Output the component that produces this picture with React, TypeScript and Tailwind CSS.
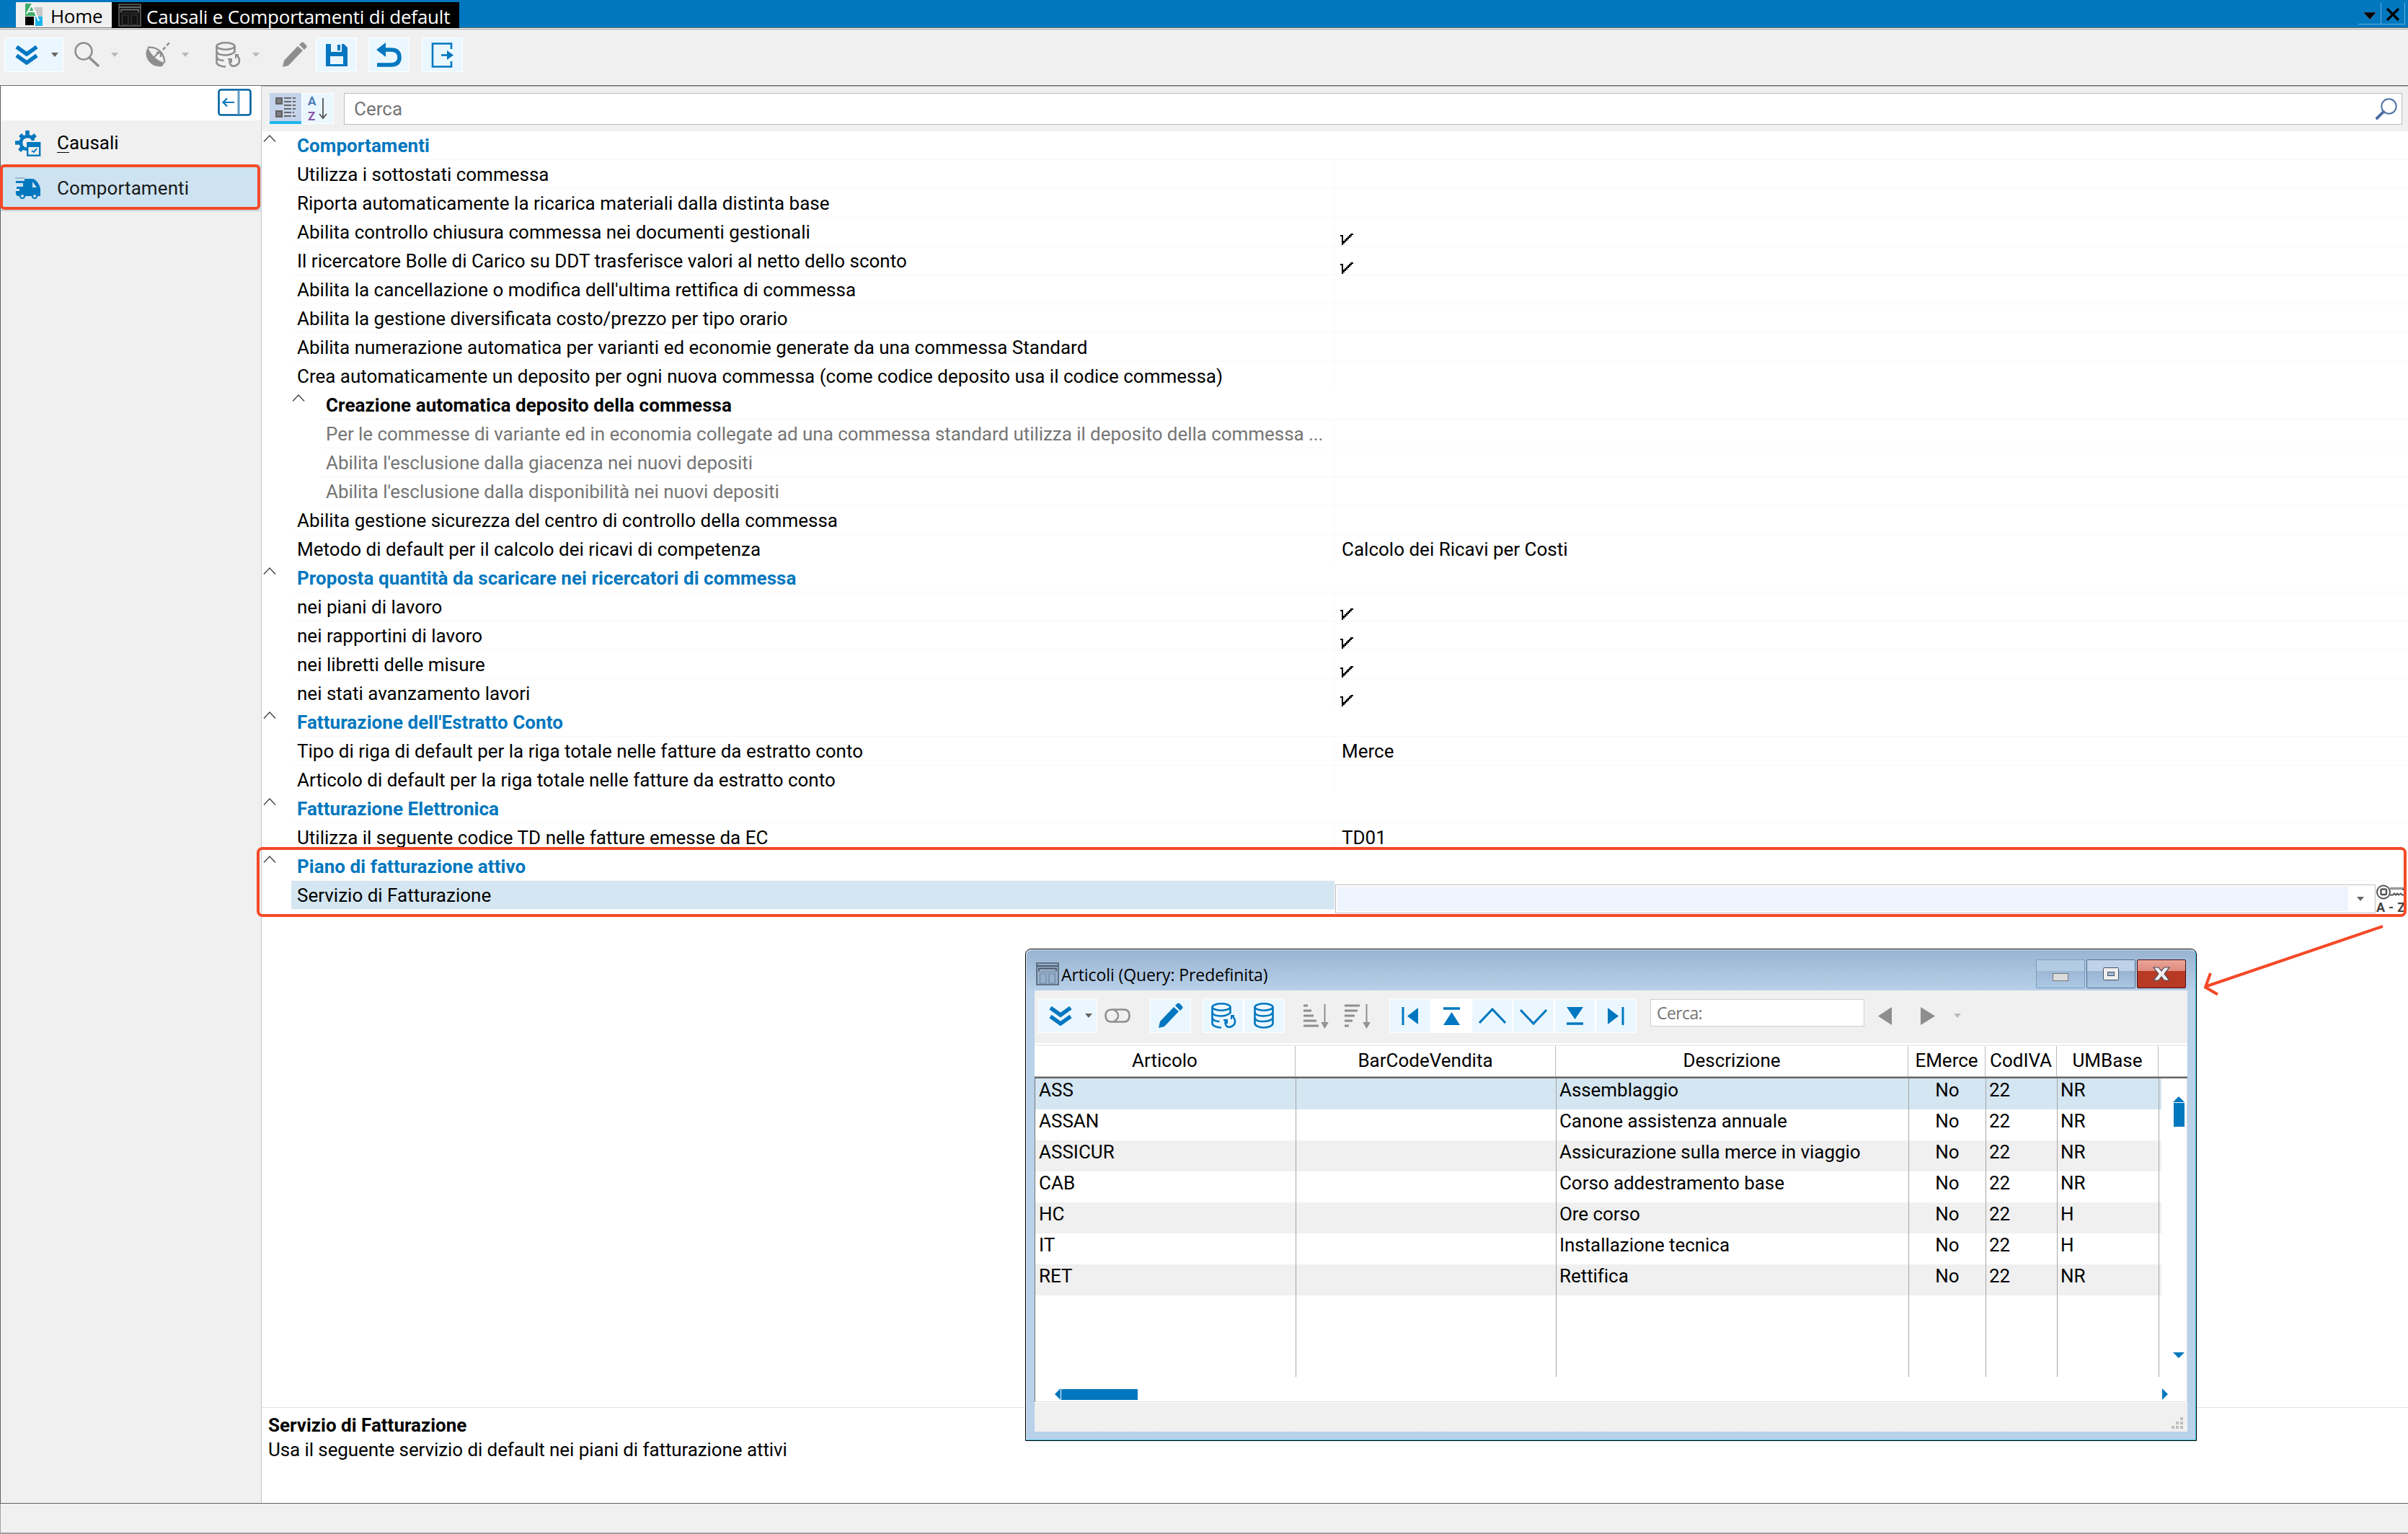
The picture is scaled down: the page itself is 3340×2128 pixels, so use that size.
import React from 'react';
import clsx from 'clsx';

type Row = {
  label: string;
  kind?: 'section' | 'group' | 'sub';
  checked?: boolean;
  value?: string;
  selected?: boolean;
};

const rows: Row[] = [
  { label: 'Comportamenti', kind: 'section' },
  { label: 'Utilizza i sottostati commessa' },
  { label: 'Riporta automaticamente la ricarica materiali dalla distinta base' },
  { label: 'Abilita controllo chiusura commessa nei documenti gestionali', checked: true },
  { label: 'Il ricercatore Bolle di Carico su DDT trasferisce valori al netto dello sconto', checked: true },
  { label: "Abilita la cancellazione o modifica dell'ultima rettifica di commessa" },
  { label: 'Abilita la gestione diversificata costo/prezzo per tipo orario' },
  { label: 'Abilita numerazione automatica per varianti ed economie generate da una commessa Standard' },
  { label: 'Crea automaticamente un deposito per ogni nuova commessa (come codice deposito usa il codice commessa)' },
  { label: 'Creazione automatica deposito della commessa', kind: 'group' },
  { label: 'Per le commesse di variante ed in economia collegate ad una commessa standard utilizza il deposito della commessa ...', kind: 'sub' },
  { label: "Abilita l'esclusione dalla giacenza nei nuovi depositi", kind: 'sub' },
  { label: "Abilita l'esclusione dalla disponibilità nei nuovi depositi", kind: 'sub' },
  { label: 'Abilita gestione sicurezza del centro di controllo della commessa' },
  { label: 'Metodo di default per il calcolo dei ricavi di competenza', value: 'Calcolo dei Ricavi per Costi' },
  { label: 'Proposta quantità da scaricare nei ricercatori di commessa', kind: 'section' },
  { label: 'nei piani di lavoro', checked: true },
  { label: 'nei rapportini di lavoro', checked: true },
  { label: 'nei libretti delle misure', checked: true },
  { label: 'nei stati avanzamento lavori', checked: true },
  { label: "Fatturazione dell'Estratto Conto", kind: 'section' },
  { label: 'Tipo di riga di default per la riga totale nelle fatture da estratto conto', value: 'Merce' },
  { label: 'Articolo di default per la riga totale nelle fatture da estratto conto' },
  { label: 'Fatturazione Elettronica', kind: 'section' },
  { label: 'Utilizza il seguente codice TD nelle fatture emesse da EC', value: 'TD01' },
  { label: 'Piano di fatturazione attivo', kind: 'section' },
  { label: 'Servizio di Fatturazione', selected: true },
];

const articles = [
  ['ASS', 'Assemblaggio', 'NR'],
  ['ASSAN', 'Canone assistenza annuale', 'NR'],
  ['ASSICUR', 'Assicurazione sulla merce in viaggio', 'NR'],
  ['CAB', 'Corso addestramento base', 'NR'],
  ['HC', 'Ore corso', 'H'],
  ['IT', 'Installazione tecnica', 'H'],
  ['RET', 'Rettifica', 'NR'],
];

const gridCols = 'grid grid-cols-[362px_361px_489px_107px_99px_141px]';

function Svg({ w, h, className, children }: { w: number; h: number; className?: string; children: React.ReactNode }) {
  return (
    <svg width={w} height={h} viewBox={`0 0 ${w} ${h}`} fill="none" className={clsx('shrink-0', className)}>
      {children}
    </svg>
  );
}

const Caret = ({ className }: { className?: string }) => (
  <Svg w={10} h={6} className={className}>
    <path d="M0 0h10L5 6z" fill="currentColor" />
  </Svg>
);

const Chevrons = () => (
  <Svg w={32} h={27}>
    <path d="M2 2l14 10L30 2M2 14l14 10 14-10" stroke="currentColor" strokeWidth="5.500" />
  </Svg>
);

const Pencil = () => (
  <Svg w={36} h={36}>
    <path d="M1 35l2-9L22 6l7 6L9 33z" fill="currentColor" />
    <path d="M24 4l3-3q1-1 3 0l4 4q1 2 0 3l-3 3z" fill="currentColor" />
  </Svg>
);

const Database = ({ refresh }: { refresh?: boolean }) => (
  <Svg w={36} h={36}>
    <g stroke="currentColor" strokeWidth="2.600">
      <ellipse cx="15" cy="6" rx="12.500" ry="4.700" />
      <path d="M2.500 6v22.500c0 3 5 6 12.500 6" />
      <path d="M2.500 13.500c1 4 6 5 12 5M2.500 21c1 4 5 5 10 5" />
      {refresh ? (
        <>
          <path d="M27.500 6v9M14 18.500q8 0 13-4" />
          <path d="M29 18q5 3 5 8t-5 7q-4 2-7-1-3-4 0-9" />
          <path d="M18 24h5v5M33 18h-4v5" strokeWidth="2" />
        </>
      ) : (
        <path d="M27.500 6v22.500c0 3-5 6-12.500 6M14 18.500c8 0 12-2 13.500-5M12 26c8 0 14-1 15.500-5" />
      )}
    </g>
  </Svg>
);

const Expander = () => (
  <Svg w={18} h={10}>
    <path d="M1 9.500L9 1l8 8.500" stroke="#444" strokeWidth="1.400" />
  </Svg>
);

const Check = () => (
  <Svg w={18} h={16} className="mt-[21px] self-start">
    <path
      d="M0 2h4v8h2v-2h2v-2h2v-2h2v-2h2v-2h4v2h-2v2h-2v2h-2v2h-2v2h-2v2h-2v2h-2v2H2V4H0z"
      fill="#000"
      shapeRendering="crispEdges"
    />
  </Svg>
);

const WindowGlyph = ({ stroke, fill }: { stroke: string; fill: string }) => (
  <Svg w={32} h={32}>
    <rect x="1" y="1" width="30" height="30" fill={fill} stroke={stroke} strokeWidth="1.500" />
    <path d="M1 5h30M4 12V8.500h24V12" stroke={stroke} strokeWidth="1.800" />
    <path d="M3 13h26M5.500 16h8.500v13H5.500zM18 16h8.500v13H18z" stroke={stroke} strokeWidth="1.200" opacity="0.500" />
  </Svg>
);

function ToolButton({ on, className, children }: { on?: boolean; className?: string; children: React.ReactNode }) {
  return (
    <div
      className={clsx(
        'flex h-12 shrink-0 items-center justify-center',
        on ? 'border border-white bg-[#ebf7ff] text-[#0077c0]' : 'text-[#8e8e8e]',
        className,
      )}
    >
      {children}
    </div>
  );
}

function TitleBar() {
  return (
    <div className="flex h-[38px] bg-[#0077be]">
      <div className="ml-[22px] mt-[3px] flex w-[133px] items-center bg-[#f0f0f0] pl-[13px]">
        <Svg w={24} h={31}>
          <path d="M0 0h9l7 17-16 0z" fill="#3fae68" />
          <path d="M11 5h13v13h-7z" fill="#c9c9c9" />
          <path d="M0 18h12v12H0z" fill="#000" />
          <path d="M14 18h10v13H14z" fill="#1cb5ea" />
          <path d="M2 14L9 2l10 22M5 11h10" stroke="#fff" strokeWidth="2" />
        </Svg>
        <span className="ml-[11px] pt-[3px] text-[26px] leading-none tracking-[-0.300px]">Home</span>
      </div>
      <div className="relative mt-[3px] flex h-9 w-[482px] items-center bg-black pl-[9px]">
        <WindowGlyph stroke="#666" fill="#111" />
        <span className="ml-[7px] whitespace-nowrap pt-[3px] text-[26px] leading-none tracking-[-0.220px] text-white">
          Causali e Comportamenti di default
        </span>
      </div>
      <div className="ml-auto mr-1 mt-1 flex h-[30px] border-b border-r border-[#62b0e0]">
        <div className="flex w-[32px] items-center justify-center border-r border-[#62b0e0] pt-[7px]">
          <Svg w={18} h={10}>
            <path d="M0 0h18L9 10z" fill="#000" stroke="#a88" strokeWidth="0.500" />
          </Svg>
        </div>
        <div className="flex w-[32px] items-center justify-center pt-[3px]">
          <Svg w={20} h={18}>
            <path d="M2 1l16 16M18 1L2 17" stroke="#000" strokeWidth="3.200" />
          </Svg>
        </div>
      </div>
    </div>
  );
}

function Toolbar() {
  return (
    <div className="flex h-[77px] border-b border-white bg-[#f0f0f0] pl-[6px] pt-[11px]">
      <ToolButton on className="w-[82px] gap-[18px] pl-[8px]">
        <Chevrons />
        <Caret className="text-[#666]" />
      </ToolButton>
      <ToolButton className="ml-[15px]">
        <Svg w={36} h={36}>
          <circle cx="13" cy="13" r="11.500" stroke="currentColor" strokeWidth="2.400" />
          <path d="M20 21l14 13" stroke="currentColor" strokeWidth="3.600" />
        </Svg>
        <Caret className="ml-[15px] text-[#b9b9b9]" />
      </ToolButton>
      <ToolButton className="ml-[37px]">
        <Svg w={36} h={36}>
          <path d="M4 8q-5 8 0 17 7 11 20 9l3-5Q12 25 4 8z" fill="currentColor" />
          <path d="M4 8q10-2 18 6 6 8 5 15" stroke="currentColor" strokeWidth="2.400" />
          <path d="M13 21l8-8M16 15h6v6" stroke="currentColor" strokeWidth="2.400" />
          <path d="M25 11l9-10" stroke="currentColor" strokeWidth="2.600" strokeDasharray="5 3" />
        </Svg>
        <Caret className="ml-[15px] text-[#b9b9b9]" />
      </ToolButton>
      <ToolButton className="ml-[36px]">
        <Database refresh />
        <Caret className="ml-[16px] text-[#b9b9b9]" />
      </ToolButton>
      <ToolButton className="ml-[31px]">
        <Pencil />
      </ToolButton>
      <ToolButton on className="ml-[11px] w-[57px]">
        <Svg w={32} h={33}>
          <path d="M1 1h25l5 5v26H1z" fill="currentColor" />
          <path d="M8 1h15v11H8zM7 18h18v11H7z" fill="#ebf7ff" />
          <path d="M17 2h4v8h-4z" fill="currentColor" />
        </Svg>
      </ToolButton>
      <ToolButton on className="ml-[16px] w-[57px]">
        <Svg w={36} h={35}>
          <path d="M8 10h12q12 0 12 10.500T20 31H1" stroke="currentColor" strokeWidth="5.500" />
          <path d="M13 0v20L0 10z" fill="currentColor" />
        </Svg>
      </ToolButton>
      <ToolButton on className="ml-[17px] w-[57px]">
        <Svg w={32} h={35}>
          <path d="M28 9V1.500H2v32h26V26" stroke="currentColor" strokeWidth="2.600" />
          <path d="M14 17.500h12" stroke="currentColor" strokeWidth="2.600" />
          <path d="M22 11l9 6.500-9 6.500z" fill="currentColor" />
        </Svg>
      </ToolButton>
    </div>
  );
}

function Sidebar() {
  return (
    <div className="w-[362px] shrink-0 border-r border-[#c8c8c8] bg-[#f0f0f0]">
      <div className="flex h-12 justify-end bg-white pr-[13px] pt-[4px]">
        <Svg w={47} h={38}>
          <rect x="1.500" y="1.500" width="44" height="35" rx="3" stroke="#00629f" strokeWidth="2.600" />
          <path d="M29 2v34" stroke="#5d9bc4" strokeWidth="3" />
          <path d="M23 19H8M13 13.500L7.500 19l5.500 5.500" stroke="#0077be" strokeWidth="2.200" />
        </Svg>
      </div>
      <div className="flex h-[61px] items-center pl-[20px] pt-[2px]">
        <Svg w={36} h={36}>
          <path d="M16 26q-8-1-8-9t9-9q7 0 8 6" stroke="#0077be" strokeWidth="4.500" />
          <path d="M17 0v7M7 6l5 5M0 17h7M6 28l5-5M28 6l-5 5" stroke="#0077be" strokeWidth="5.500" />
          <rect x="17.200" y="17.200" width="17" height="17.500" fill="#f0f0f0" stroke="#0077be" strokeWidth="2.400" />
          <path d="M17 17h18v6H17z" fill="#0077be" />
          <path d="M23 28l3 2 4-5" stroke="#0077be" strokeWidth="2" />
        </Svg>
        <span className="ml-[22px] text-[26px]">
          <span className="underline decoration-1 underline-offset-4">C</span>ausali
        </span>
      </div>
      <div className="flex h-[65px] items-center border-b border-[#c8c8c8] bg-[#cde3f1] pl-[20px] pt-[2px] text-[#1a1a1a]">
        <Svg w={36} h={30}>
          <path d="M13 2h12q8 4 10 14v10H3q-3-3-2-7h5v-3H2v-3h9V8H1V5h12z" fill="#0077be" />
          <path d="M0 1h13" stroke="#9db9cc" strokeWidth="2" />
          <path d="M24 6l6 8h-6z" fill="#cde3f1" />
          <circle cx="10" cy="26" r="3" fill="#cde3f1" stroke="#0077be" strokeWidth="2" />
          <circle cx="27" cy="26" r="3" fill="#cde3f1" stroke="#0077be" strokeWidth="2" />
        </Svg>
        <span className="ml-[22px] text-[26px] tracking-[0.100px]">Comportamenti</span>
      </div>
    </div>
  );
}

function SearchBar() {
  return (
    <div className="flex h-[60px] bg-[#f0f0f0] pl-[11px] pr-[8px] pt-[7px]">
      <div className="flex h-[43px] w-[44px] items-center justify-center border-b-4 border-[#1cb5ea] bg-[#c5d3ea]">
        <Svg w={28} h={30}>
          <path d="M1.500 2.500h7v7h-7zM1.500 20.500h7v7h-7z" stroke="#666" strokeWidth="3" />
          <path d="M5 3v6M2 6h6M5 21v6M2 24h6" stroke="#666" strokeWidth="1.500" />
          <path
            d="M12 2h10M24 2h4M12 7h10M24 7h4M12 12h10M24 12h4M12 17h10M24 17h4M12 22h10M24 22h2M12 27h10M24 27h4"
            stroke="#666"
            strokeWidth="2"
          />
        </Svg>
      </div>
      <div className="flex h-[43px] w-[45px] items-center justify-center border border-white bg-[#ebf7ff]">
        <div className="flex w-[12px] flex-col gap-px text-[17px] font-bold leading-[20px]">
          <span className="h-[20px] text-[#4a7ab5]">A</span>
          <span className="h-[20px] text-[#8a55ad]">Z</span>
        </div>
        <Svg w={12} h={30} className="ml-[3px]">
          <path d="M6 0v28M1 22l5 6 5-6" stroke="#555" strokeWidth="1.800" />
        </Svg>
      </div>
      <div className="ml-[14px] flex h-[44px] flex-1 items-center justify-between border border-[#bdbdbd] bg-white pl-[13px] pr-[6px]">
        <span className="text-[26px] text-[#757575]">Cerca</span>
        <Svg w={30} h={30}>
          <circle cx="18.500" cy="11.500" r="10.200" stroke="#4f74a8" strokeWidth="2" />
          <path d="M11 19L2 28" stroke="#4f6fa5" strokeWidth="4" strokeLinecap="round" />
        </Svg>
      </div>
    </div>
  );
}

function PropertyRow({ row, lined }: { row: Row; lined: boolean }) {
  const heading = row.kind === 'section' || row.kind === 'group';
  const indented = row.kind === 'group' || row.kind === 'sub';
  return (
    <div className={clsx('flex h-10', indented ? 'pl-[42px]' : 'pl-[2px]')}>
      <div className="w-[39px] shrink-0 pt-[5px]">{heading && <Expander />}</div>
      <div className={clsx('flex min-w-0 flex-1 border-b', lined ? 'border-[#f8f8f8]' : 'border-transparent')}>
        <div
          className={clsx(
            'flex shrink-0 items-center whitespace-nowrap pl-[8px] pt-px text-[26px]',
            indented ? 'w-[1408px]' : 'w-[1448px]',
            !heading && 'border-r border-[#fafafa]',
            heading && 'font-bold tracking-[0.060px]',
            row.kind === 'section' && 'text-[#0077be]',
            row.kind === 'sub' && 'tracking-[-0.050px] text-[#757575]',
            row.selected && 'bg-[#d4e6f1]',
          )}
        >
          {row.label}
        </div>
        {row.selected ? (
          <div className="mt-[5px] flex h-10 flex-1">
            <div className="flex flex-1 border border-[#c0c0c0] bg-white p-[2px]">
              <div className="flex-1 bg-[#edf4fd]" />
              <div className="flex w-[35px] items-center justify-center pr-px">
                <Caret className="text-[#666]" />
              </div>
            </div>
            <div className="w-[45px] pl-[1px]">
              <Svg w={42} h={22}>
                <circle cx="10" cy="10.500" r="9" stroke="#555" strokeWidth="2" />
                <rect x="6.500" y="6.500" width="7.500" height="7.500" rx="1.500" stroke="#555" strokeWidth="2.400" />
                <path d="M19 5.500h20" stroke="#999" strokeWidth="3.500" />
                <path d="M19 14.500h4l2-2 2 2 2-2 2 2 3-2 2 2h4M36 7h4" stroke="#555" strokeWidth="2" />
              </Svg>
              <div className="flex gap-[5px] whitespace-nowrap text-[18px] font-bold leading-[20px] text-[#444]">
                <span>A</span>
                <span>-</span>
                <span>Z</span>
              </div>
            </div>
          </div>
        ) : (
          <div className="flex items-center pl-[7px] pt-px text-[26px]">
            {row.checked && <Check />}
            {row.value && <span className="pl-[2px]">{row.value}</span>}
          </div>
        )}
      </div>
    </div>
  );
}

function DialogToolbar() {
  return (
    <div className="flex h-[75px] border-b-2 border-white bg-[#f0f0f0] pl-[5px] pt-[11px]">
      <ToolButton on className="w-[82px] gap-[18px] pl-[8px]">
        <Chevrons />
        <Caret className="text-[#666]" />
      </ToolButton>
      <ToolButton className="ml-[10px]">
        <Svg w={36} h={20}>
          <path d="M10 1.500h17q7.500 0 7.500 8.500T27 18.500H10Q1.500 18.500 1.500 10T10 1.500z" stroke="currentColor" strokeWidth="2.600" />
          <path d="M13 2q6 3 6 8t-6 8" stroke="currentColor" strokeWidth="2.400" />
        </Svg>
      </ToolButton>
      <ToolButton on className="ml-[27px] w-[57px]">
        <Pencil />
      </ToolButton>
      <ToolButton on className="ml-[16px] w-[57px]">
        <Database refresh />
      </ToolButton>
      <ToolButton on className="w-[57px] pl-[5px]">
        <Database />
      </ToolButton>
      <ToolButton className="ml-[26px]">
        <Svg w={36} h={35}>
          <path d="M0 3h6M0 10h11M0 17h14M0 24h18M0 31h21" stroke="currentColor" strokeWidth="3" />
          <path d="M29.500 1v32M26 27l3.500 6 3.500-6z" stroke="currentColor" strokeWidth="2" />
        </Svg>
      </ToolButton>
      <ToolButton className="ml-[21px]">
        <Svg w={36} h={35}>
          <path d="M0 3h21M0 10h18M0 17h14M0 24h11M0 31h6" stroke="currentColor" strokeWidth="3" />
          <path d="M30.500 1v32M27 27l3.500 6 3.500-6z" stroke="currentColor" strokeWidth="2" />
        </Svg>
      </ToolButton>
      <ToolButton on className="ml-[26px] w-[58px]">
        <Svg w={26} h={25}>
          <path d="M3 0v25" stroke="currentColor" strokeWidth="3" />
          <path d="M24 1v23L9 12.500z" fill="currentColor" />
        </Svg>
      </ToolButton>
      <ToolButton on className="w-[56px] bg-white!">
        <Svg w={25} h={25}>
          <path d="M1 2h23" stroke="currentColor" strokeWidth="3.500" />
          <path d="M1 25h23L12.500 7z" fill="currentColor" />
        </Svg>
      </ToolButton>
      <ToolButton on className="w-[57px]">
        <Svg w={40} h={24}>
          <path d="M2 22L20 3l18 19" stroke="currentColor" strokeWidth="3.200" />
        </Svg>
      </ToolButton>
      <ToolButton on className="w-[58px] pt-1">
        <Svg w={40} h={24}>
          <path d="M2 2l18 19L38 2" stroke="currentColor" strokeWidth="3.200" />
        </Svg>
      </ToolButton>
      <ToolButton on className="w-[57px]">
        <Svg w={25} h={25}>
          <path d="M1 23h23" stroke="currentColor" strokeWidth="3.500" />
          <path d="M1 0h23L12.500 17z" fill="currentColor" />
        </Svg>
      </ToolButton>
      <ToolButton on className="w-[57px] pr-[2px]">
        <Svg w={26} h={25}>
          <path d="M23 0v25" stroke="currentColor" strokeWidth="3" />
          <path d="M2 1v23l15-11.500z" fill="currentColor" />
        </Svg>
      </ToolButton>
      <div className="ml-[19px] mt-px flex h-[38px] w-[297px] items-center border border-[#cfcfcf] bg-white pl-2 pt-px text-[23px] tracking-[-0.600px] text-[#757575] font-['Open_Sans','Noto_Sans',sans-serif]">
        Cerca:
      </div>
      <ToolButton className="ml-[19px]">
        <Svg w={20} h={25}>
          <path d="M19 0v25L0 12.500z" fill="currentColor" />
        </Svg>
        <Svg w={20} h={25} className="ml-[39px]">
          <path d="M0 0v25l20-12.500z" fill="currentColor" />
        </Svg>
        <Caret className="ml-[26px] text-[#b9b9b9]" />
      </ToolButton>
    </div>
  );
}

function WindowButton({ tone, children }: { tone: string; children: React.ReactNode }) {
  return <div className={clsx('flex h-10 w-[68px] items-center justify-center rounded-[2px] border', tone)}>{children}</div>;
}

function ArticlesDialog() {
  return (
    <div className="absolute left-[1422px] top-[1316px] flex h-[683px] w-[1625px] flex-col rounded-t-[8px] border border-black bg-[#b9d1ea] px-[12px] pb-[12px]">
      <div className="absolute inset-0 rounded-t-[8px] border border-b-[#3cc8dc] border-l-[#dfeaf6] border-r-[#3cc8dc] border-t-[#e6eef7] bg-linear-to-b from-[#99b4d1] via-[#b9d1ea] via-[58px] to-[#b9d1ea]" />
      <div className="relative flex h-[57px] shrink-0 items-center">
        <div className="ml-[2px] mt-[11px]">
          <WindowGlyph stroke="#4d5b6b" fill="#97b1cd" />
        </div>
        <span className="ml-[3px] mt-[14px] text-[23px] leading-none tracking-[-0.100px] font-['Open_Sans','Noto_Sans',sans-serif]">
          Articoli (Query: Predefinita)
        </span>
        <div className="ml-auto mr-[2px] mt-[11px] flex gap-[2px]">
          <WindowButton tone="border-[#7d9dc0] bg-linear-to-b from-[#b3cbe3] from-40% via-[#9cb8d6] via-40% to-[#adc8e4]">
            <Svg w={22} h={11} className="mt-[8px]">
              <rect x="0.500" y="0.500" width="21" height="10" fill="#dcdcdc" stroke="#777" />
            </Svg>
          </WindowButton>
          <WindowButton tone="border-[#52708f] bg-linear-to-b from-[#bed3e9] from-40% via-[#98b4d2] via-40% to-[#a9c6e4]">
            <Svg w={22} h={18}>
              <rect x="0.500" y="0.500" width="21" height="17" rx="1" fill="#eee" stroke="#445064" />
              <rect x="6.500" y="6.500" width="9" height="5" fill="#9fbad8" stroke="#445064" />
            </Svg>
          </WindowButton>
          <WindowButton tone="border-[#4a0f14] bg-linear-to-b from-[#e9a295] from-5% via-[#dd8a7c] via-40% to-[#b93a24] to-40%">
            <Svg w={24} h={20}>
              <path d="M1 1h7l4 5 4-5h7l-7 9 7 9h-7l-4-5-4 5H1l7-9z" fill="#f0f0f0" stroke="#4b4658" strokeWidth="1.200" />
            </Svg>
          </WindowButton>
        </div>
      </div>
      <div className="relative flex min-h-0 flex-1 flex-col bg-[#f0f0f0]">
        <DialogToolbar />
        <div className={clsx(gridCols, 'mt-[2px] h-[42px] bg-white text-center text-[26px] leading-[40px]')}>
          {['Articolo', 'BarCodeVendita', 'Descrizione', 'EMerce', 'CodIVA', 'UMBase'].map((h) => (
            <div key={h} className="border-r border-[#bbb]">
              {h}
            </div>
          ))}
        </div>
        <div className="h-[3px] border-b-2 border-t border-b-[#666] border-t-[#aaa]" />
        <div className="flex h-[449px] flex-col border-b border-l border-r border-b-[#ddd] border-l-[#777] border-r-[#ddd] bg-white">
          <div className="relative flex h-[414px]">
            <div className="w-[1562px]">
              {articles.map(([code, name, unit], i) => (
                <div
                  key={code}
                  className={clsx(
                    gridCols,
                    'h-[43px] text-[26px] leading-[32px]',
                    i === 0 ? 'bg-[#d4e6f1]' : i % 2 === 0 ? 'bg-[#f0f0f0]' : 'bg-white',
                  )}
                >
                  <div className="border-r border-[#a5a5a5] pl-[5px]">{code}</div>
                  <div className="border-r border-[#a5a5a5]" />
                  <div className="border-r border-[#a5a5a5] pl-[4px] tracking-[-0.060px]">{name}</div>
                  <div className="border-r border-[#a5a5a5] text-center">No</div>
                  <div className="border-r border-[#a5a5a5] pl-[4px]">22</div>
                  <div className="border-r border-[#a5a5a5] pl-[4px]">{unit}</div>
                </div>
              ))}
              <div className={clsx(gridCols, 'h-[113px]')}>
                {articles.slice(1).map(([code]) => (
                  <div key={code} className="border-r border-[#a5a5a5]" />
                ))}
              </div>
            </div>
            {/* vertical scrollbar */}
            <div className="ml-[16px] flex flex-col items-center pt-[25px] text-[#0077be]">
              <Svg w={16} h={8}>
                <path d="M8 0l8 8H0z" fill="currentColor" />
              </Svg>
              <div className="mt-px h-[33px] w-[15px] bg-[#0077be]" />
              <Svg w={16} h={8} className="mt-[313px]">
                <path d="M0 0h16L8 8z" fill="currentColor" />
              </Svg>
            </div>
          </div>
          {/* horizontal scrollbar */}
          <div className="mt-[16px] flex items-center pl-[27px]">
            <Svg w={8} h={16}>
              <path d="M8 0v16L0 8z" fill="#0077be" />
            </Svg>
            <div className="ml-px h-[15px] w-[106px] bg-[#0077be]" />
            <Svg w={8} h={16} className="ml-[1421px]">
              <path d="M0 0v16l8-8z" fill="#0077be" />
            </Svg>
          </div>
        </div>
        <div className="flex flex-1 items-end justify-end border-t border-white pb-[4px] pr-[6px]">
          <Svg w={16} h={16}>
            <path d="M12 0h4v4h-4zM6 6h4v4H6zM12 6h4v4h-4zM0 12h4v4H0zM6 12h4v4H6zM12 12h4v4h-4z" fill="#bdbdbd" />
          </Svg>
        </div>
      </div>
    </div>
  );
}

function Annotations() {
  return (
    <>
      <div className="absolute left-0 top-[228px] h-[63px] w-[361px] rounded-[6px] border-4 border-[#f54927]" />
      <div className="absolute left-[356px] top-[1175px] h-[97px] w-[2982px] rounded-[8px] border-4 border-[#f54927]" />
      <svg className="absolute left-[3050px] top-[1280px]" width="260" height="105" viewBox="0 0 260 105" fill="none">
        <path d="M255 5L8 89M16 70L9 89.500l17 10" stroke="#f54927" strokeWidth="4" />
      </svg>
    </>
  );
}

function App() {
  return (
    <div className="relative flex h-[2128px] w-[3340px] flex-col overflow-hidden bg-white text-black font-['Roboto',sans-serif]">
      <div className="font-['Open_Sans','Noto_Sans',sans-serif]">
        <TitleBar />
      </div>
      <div className="h-[3px] border-b border-t border-b-[#a0a0a0] border-t-[#696969] bg-white" />
      <Toolbar />
      <div className="flex min-h-0 flex-1 border-b border-l border-t border-[#606060]">
        <Sidebar />
        <div className="flex min-w-0 flex-1 flex-col">
          <div className="h-[3px] shrink-0 border-b border-white bg-[#c8c8c8]" />
          <SearchBar />
          <div className="flex flex-1 flex-col">
            {rows.map((row, i) => (
              <PropertyRow
                key={row.label}
                row={row}
                lined={rows[i + 1]?.kind !== 'section' && rows[i + 1]?.kind !== 'group'}
              />
            ))}
          </div>
          <div className="h-[133px] border-t border-[#e0e0e0] pl-[9px] pt-[7px] text-[26px] leading-[34px]">
            <div className="font-bold">Servizio di Fatturazione</div>
            <div className="tracking-[-0.090px]">Usa il seguente servizio di default nei piani di fatturazione attivi</div>
          </div>
        </div>
      </div>
      <div className="h-[42px] border-b-2 border-l border-[#a0a0a0] bg-[#f0f0f0]" />
      <ArticlesDialog />
      <Annotations />
    </div>
  );
}

export default App;
